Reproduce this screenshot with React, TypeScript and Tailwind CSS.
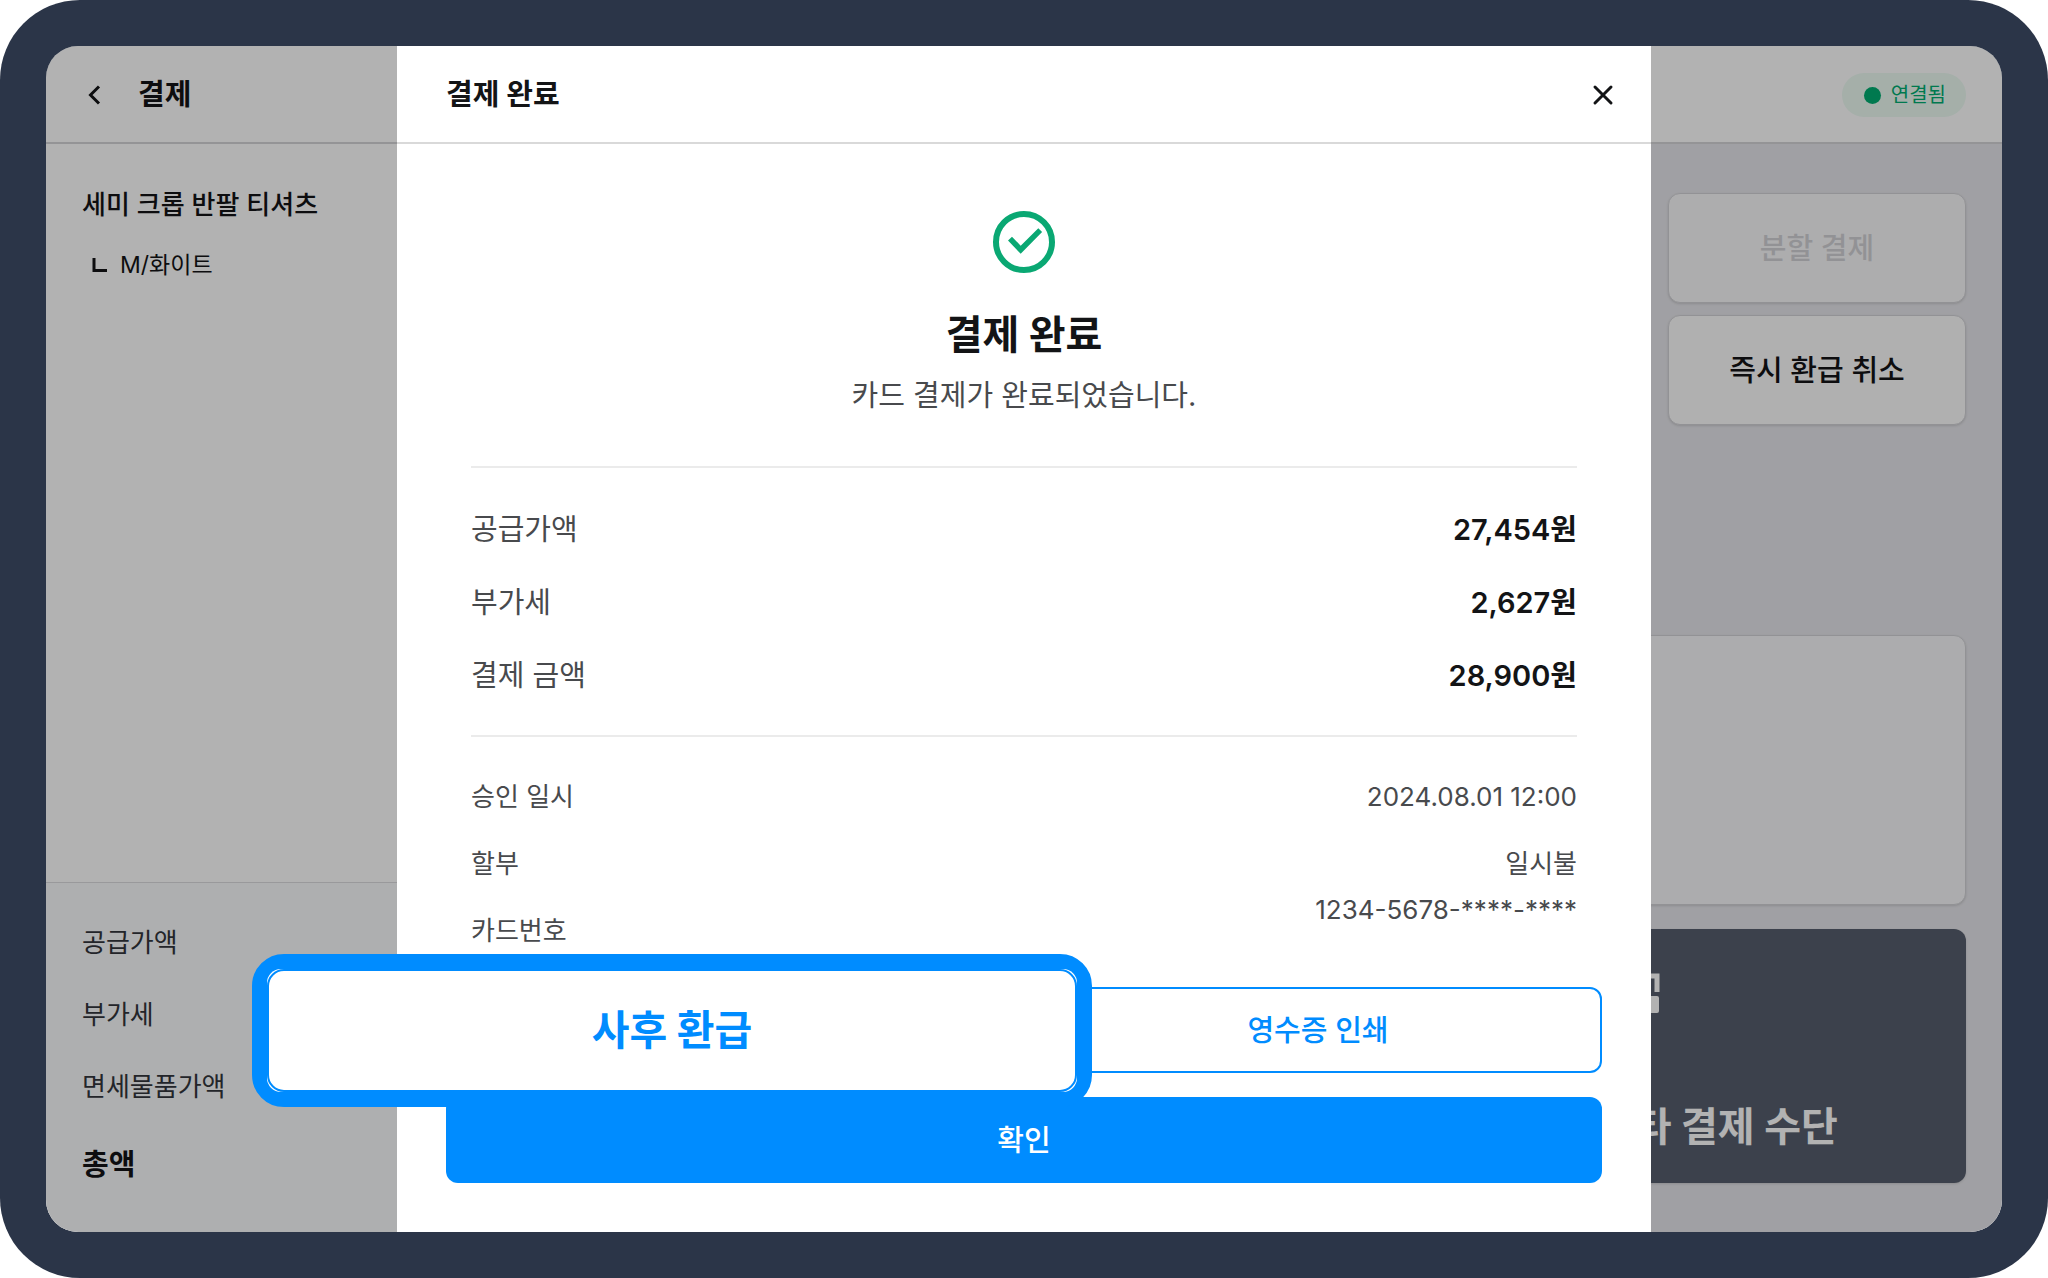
import React from 'react';

const amounts = [
    { label: '공급가액', value: '27,454원' },
    { label: '부가세', value: '2,627원' },
    { label: '결제 금액', value: '28,900원' },
];

const summary = ['공급가액', '부가세', '면세물품가액'];

const BackIcon = () => (
    <svg width="16" height="24" viewBox="0 0 16 24" fill="none" stroke="currentColor" strokeWidth="3">
        <path d="M13 3.500 4.500 12l8.500 8.500" />
    </svg>
);

const CloseIcon = () => (
    <svg width="24" height="24" viewBox="0 0 24 24" fill="none" stroke="currentColor" strokeWidth="3" strokeLinecap="round">
        <path d="M4 4l16 16M20 4 4 20" />
    </svg>
);

const CheckCircle = () => (
    <svg width="74" height="74" viewBox="0 0 74 74">
        <circle cx="37" cy="37" r="28" fill="none" stroke="#0aa873" strokeWidth="6" />
        <path d="M21 35.5 25 31.7l8.7 9L51.3 23.2l3.8 3.8-21.4 21.8z" fill="#0aa873" />
    </svg>
);

const Checkout = () => (
    <div className="flex flex-col bg-white [grid-area:1/1]">
        <header className="flex h-[98px] items-center justify-between border-b-2 border-[#d5d5d7] px-9 pt-[2px]">
            <div className="flex items-center gap-8">
                <button aria-label="뒤로" className="px-1">
                    <BackIcon />
                </button>
                <h1 className="text-[29px] leading-10 font-bold">결제</h1>
            </div>
            <div className="flex h-11 items-center gap-[10px] rounded-full bg-[#ecfbf3] pr-5 pl-[22px] text-[20px] leading-7 text-[#00ae71]">
                <span className="size-[17px] rounded-full bg-[#00ae71]" />
                연결됨
            </div>
        </header>

        <div className="flex flex-1">
            <aside className="flex w-1/4 flex-col">
                <div className="px-9 pt-[41px]">
                    <div className="text-[26px] leading-10 font-medium">세미 크롭 반팔 티셔츠</div>
                    <div className="mt-5 flex items-center gap-3 pl-[10px] text-[23px] leading-10">
                        <svg width="16" height="16" viewBox="0 0 16 16" fill="none" stroke="currentColor" strokeWidth="3">
                            <path d="M2 1v12.500h13" />
                        </svg>
                        M/화이트
                    </div>
                </div>
                <div className="mt-auto flex flex-col gap-8 border-t border-[#dcdcde] bg-[#fafbfc] px-9 pt-10 pb-[47px] text-[26px] leading-10 text-[#33363c]">
                    {summary.map((label) => (
                        <div key={label}>{label}</div>
                    ))}
                    <div className="mt-[6px] text-[29px] font-bold text-[#131416]">총액</div>
                </div>
            </aside>

            <main className="flex flex-1 flex-col items-end bg-[#e6e6eb] px-9 py-[49px]">
                <div className="flex w-[298px] flex-col gap-3">
                    <button disabled className="h-[110px] rounded-xl border border-[#d2d2d6] bg-[#f8f8fa] pt-[2px] text-[29px] font-medium text-[#d2d2d6] shadow-sm">
                        분할 결제
                    </button>
                    <button className="h-[110px] rounded-xl border border-[#d2d2d6] bg-[#fcfcfd] pt-[2px] text-[29px] font-medium shadow-sm">
                        즉시 환급 취소
                    </button>
                </div>
                <div className="mt-auto flex w-[494px] flex-col gap-6">
                    <div className="h-[270px] rounded-xl border border-[#d2d2d6] bg-[#f6f7f9] shadow-sm" />
                    <button className="flex h-[254px] flex-col items-start justify-between rounded-xl bg-[#565e6d] px-[126px] pt-10 pb-8 text-white shadow-sm">
                        <svg width="64" height="48" viewBox="0 0 64 48" fill="none">
                            <path d="M3 23V7h56v16" stroke="#ffffff" strokeWidth="5" />
                            <rect y="27" width="61" height="17" rx="2" fill="#ffffff" />
                        </svg>
                        <span className="text-[40px] leading-12 font-bold whitespace-nowrap">기타 결제 수단</span>
                    </button>
                </div>
            </main>
        </div>
    </div>
);

const PaymentModal = () => (
    <div role="dialog" aria-label="결제 완료" className="flex w-full max-w-[1254px] flex-col bg-white">
        <div className="flex h-[98px] items-center justify-between border-b-2 border-[#d9d9d9] pt-[2px] pr-9 pl-[49px]">
            <h2 className="text-[29px] leading-10 font-bold">결제 완료</h2>
            <button aria-label="닫기">
                <CloseIcon />
            </button>
        </div>

        <div className="px-[74px] text-[#484a4d]">
            <div className="flex flex-col items-center pt-[61px] pb-[50px]">
                <CheckCircle />
                <div className="mt-8 text-[40px] leading-12 font-bold text-[#131416]">결제 완료</div>
                <div className="mt-[17px] text-[29px] leading-10">카드 결제가 완료되었습니다.</div>
            </div>

            <dl className="flex flex-col gap-[33px] border-y-2 border-[#ebebeb] pt-[42px] pb-[39px] text-[29px] leading-10">
                {amounts.map((item) => (
                    <div key={item.label} className="flex justify-between">
                        <dt>{item.label}</dt>
                        <dd className="font-semibold text-[#131416]">{item.value}</dd>
                    </div>
                ))}
            </dl>

            <dl className="flex justify-between pt-10 text-[26px] leading-10">
                <div className="flex flex-col gap-[27px]">
                    <dt>승인 일시</dt>
                    <dt>할부</dt>
                    <dt>카드번호</dt>
                </div>
                <div className="flex flex-col text-right">
                    <dd>2024.08.01 12:00</dd>
                    <dd className="mt-[27px]">일시불</dd>
                    <dd className="mt-[6px]">1234-5678-****-****</dd>
                </div>
            </dl>
        </div>

        <div className="mt-auto flex flex-col gap-6 px-[49px] pb-[49px] text-[29px] font-medium">
            <div className="flex gap-6">
                <div className="relative h-[86px] flex-1">
                    <div className="absolute -top-[33px] -right-[82px] -bottom-[34px] -left-[194px] rounded-[32px] border-[15px] border-[#008cff] bg-[#008cff]">
                        <div className="size-full rounded-[14px] bg-white">
                            <button className="size-full rounded-[17px] border-2 border-[#008cff] bg-white text-[41px] font-bold text-[#008cff]">
                                사후 환급
                            </button>
                        </div>
                    </div>
                </div>
                <button className="h-[86px] flex-1 rounded-xl border-2 border-[#008cff] pt-[2px] text-[#008cff]">영수증 인쇄</button>
            </div>
            <button className="h-[86px] rounded-xl bg-[#008cff] pt-[2px] text-white">확인</button>
        </div>
    </div>
);

const App = () => {
    return (
        <div className="flex min-h-screen rounded-[80px] bg-[#2b3548] p-[46px] font-[Inter,'Noto_Sans_CJK_KR',sans-serif] text-[#131416]">
            <div className="grid flex-1 overflow-hidden rounded-[32px]">
                <Checkout />
                <div className="z-10 flex justify-center bg-black/30 [grid-area:1/1]">
                    <PaymentModal />
                </div>
            </div>
        </div>
    );
};

export default App;
